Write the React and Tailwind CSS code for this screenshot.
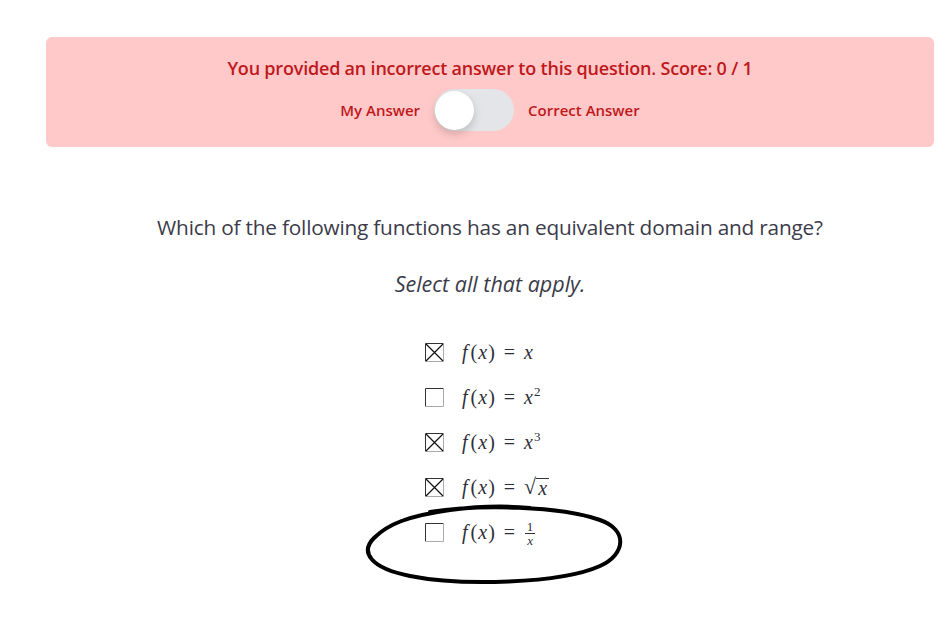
import React from 'react';

function Box({ checked }) {
  return (
    <svg width="19" height="19" viewBox="0 0 19 19" className="shrink-0">
      <rect x="0" y="0" width="19" height="19" fill="#fff" />
      <path d="M0.5 18.5 V0.5 H18.5" fill="none" stroke="#333" strokeWidth="1" />
      <path d="M18.5 0.5 V18.5 H0.5" fill="none" stroke="#aaa" strokeWidth="1" />
      {checked && (
        <path d="M1 1 L18 18 M18 1 L1 18" stroke="#111" strokeWidth="1.2" />
      )}
    </svg>
  );
}

const mi = 'italic';

function Fx() {
  return (
    <>
      <span className={mi}>f</span>
      <span className="ml-[3px]">(</span>
      <span className={mi + ' mx-[1px]'}>x</span>
      <span>)</span>
      <span className="mx-[9px]">=</span>
    </>
  );
}

const options = [
  {
    checked: true,
    rhs: <span className={mi}>x</span>,
  },
  {
    checked: false,
    rhs: (
      <span>
        <span className={mi}>x</span>
        <sup className="text-[13px] relative top-[-8px] ml-[1px]">2</sup>
      </span>
    ),
  },
  {
    checked: true,
    rhs: (
      <span>
        <span className={mi}>x</span>
        <sup className="text-[13px] relative top-[-8px] ml-[1px]">3</sup>
      </span>
    ),
  },
  {
    checked: true,
    rhs: (
      <span className="inline-flex items-end">
        <span className="text-[22px] leading-none">√</span>
        <span className={mi + ' border-t border-[#333] leading-[19px] px-[2px]'}>x</span>
      </span>
    ),
  },
  {
    checked: false,
    rhs: (
      <span className="inline-flex flex-col items-center text-[13px] leading-[11px] relative top-[1px] ml-[1px]">
        <span>1</span>
        <span className="border-t border-[#333] w-[10px] my-[1px]" />
        <span className="italic">x</span>
      </span>
    ),
  },
];

export default function App() {
  return (
    <div
      className="relative w-[939px] h-[643px] bg-white pl-[46px] pr-[5px] pt-[37px] overflow-hidden"
      style={{ fontFamily: '"Open Sans", Lato, sans-serif' }}
    >
      <div className="bg-[#ffc9c9] rounded-[6px] pt-[19px] pb-[16px] flex flex-col items-center text-[#c0181c]">
        <div className="text-[18px] font-semibold leading-[24px] tracking-[-0.2px]">
          You provided an incorrect answer to this question. Score: 0 / 1
        </div>
        <div className="flex items-center mt-[9px] text-[15px] font-semibold">
          <span>My Answer</span>
          <div className="mx-[14px] w-[80px] h-[42px] rounded-full bg-[#e4e5e9] relative">
            <div className="absolute left-[1px] top-[2px] w-[39px] h-[39px] rounded-full bg-white shadow-[0_4px_8px_rgba(0,0,0,0.18)]" />
          </div>
          <span>Correct Answer</span>
        </div>
      </div>

      <div className="flex flex-col items-center text-[#3b3b4a]">
        <p className="mt-[68px] text-[20.8px] leading-[24px] tracking-[-0.2px]">
          Which of the following functions has an equivalent domain and range?
        </p>
        <p className="mt-[33px] text-[21.5px] leading-[24px] italic">Select all that apply.</p>

        <div
          className="mt-[46px] flex flex-col gap-[25px] text-[20px] text-[#2f2f3a] self-start ml-[379px] font-['Liberation_Serif','Times_New_Roman',serif]"
        >
          {options.map((o, i) => (
            <div key={i} className="flex items-center h-[20px]">
              <Box checked={o.checked} />
              <div className="ml-[18px] flex items-center leading-none">
                <Fx />
                {o.rhs}
              </div>
            </div>
          ))}
        </div>
      </div>

      <svg
        className="absolute left-[360px] top-[502px] pointer-events-none"
        width="268"
        height="86"
        viewBox="0 0 268 86"
      >
        <path
          d="M70 10 C120 2 200 4 240 18 C268 28 266 52 240 64 C200 82 100 84 50 74 C10 66 0 50 14 36 C28 22 48 14 90 8 C120 4 150 4 170 6"
          fill="none"
          stroke="#000"
          strokeWidth="4"
          strokeLinecap="round"
        />
      </svg>
    </div>
  );
}
